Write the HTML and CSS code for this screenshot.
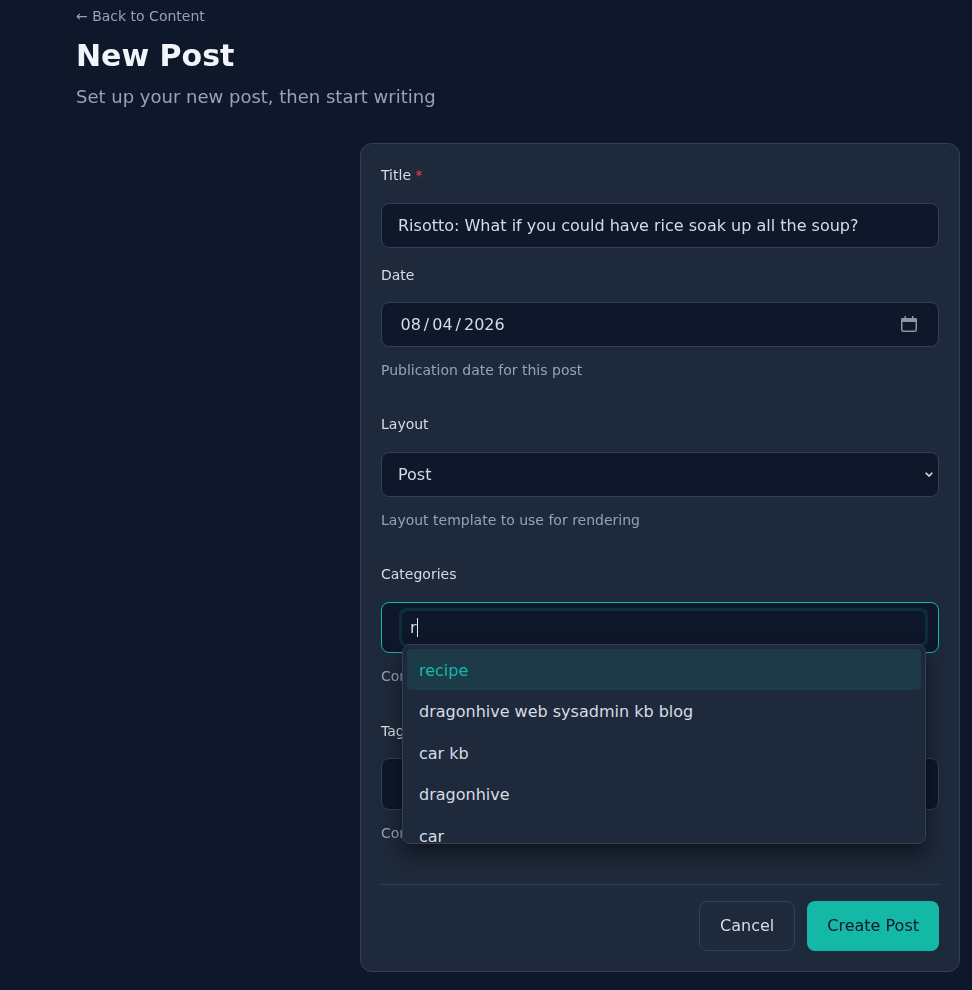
FILE: index.html
```html
<!DOCTYPE html>
<html lang="en">

<head>
    <meta charset="UTF-8">
    <meta name="viewport" content="width=device-width, initial-scale=1.0">
    <title>New Post</title>
    <link rel="stylesheet" href="styles.css">
</head>

<body>
    <main class="page">
        <a class="back-link" href="#">← Back to Content</a>
        <h1 class="page-title">New Post</h1>
        <p class="page-subtitle">Set up your new post, then start writing</p>

        <form class="post-form">
            <div class="field">
                <label class="field-label" for="title">Title <span class="required">*</span></label>
                <input class="text-input" id="title" type="text" value="Risotto: What if you could have rice soak up all the soup?">
            </div>

            <div class="field">
                <label class="field-label" for="date">Date</label>
                <input class="text-input" id="date" type="date" value="2026-08-04">
                <p class="field-hint">Publication date for this post</p>
            </div>

            <div class="field">
                <label class="field-label" for="layout">Layout</label>
                <select class="text-input select-input" id="layout">
                    <option>Post</option>
                    <option>Page</option>
                </select>
                <p class="field-hint">Layout template to use for rendering</p>
            </div>

            <div class="field">
                <label class="field-label" for="categories">Categories</label>
                <div class="tag-box tag-box-active">
                    <input class="tag-input" id="categories" type="text" value="r">
                    <span class="caret"></span>
                    <ul class="suggestions">
                        <li class="suggestion suggestion-active">recipe</li>
                        <li class="suggestion">dragonhive web sysadmin kb blog</li>
                        <li class="suggestion">car kb</li>
                        <li class="suggestion">dragonhive</li>
                        <li class="suggestion">car</li>
                        <li class="suggestion">kb</li>
                    </ul>
                </div>
                <p class="field-hint">Comma-separated categories</p>
            </div>

            <div class="field">
                <label class="field-label" for="tags">Tags</label>
                <div class="tag-box">
                    <input class="tag-input tag-input-idle" id="tags" type="text">
                </div>
                <p class="field-hint">Comma-separated tags</p>
            </div>

            <div class="form-actions">
                <button class="btn btn-secondary" type="button">Cancel</button>
                <button class="btn btn-primary" type="submit">Create Post</button>
            </div>
        </form>
    </main>
</body>

</html>
```
FILE: styles.css
```css
html {
    color-scheme: dark;
}

body {
    margin: 0;
    font-family: "DejaVu Sans", sans-serif;
    line-height: 1.6;
    background-color: #0f172a;
    color: #d5dce6;
}

.page {
    display: flex;
    flex-direction: column;
    align-items: flex-start;
    padding: 5px 12px 18px 76px;
    will-change: opacity;
}

.back-link {
    font-size: 14px;
    color: #94a3b8;
    text-decoration: none;
}

.page-title {
    margin: 11px 0 0;
    font-size: 30px;
    line-height: 1.2;
    font-weight: 700;
    color: #f1f5f9;
}

.page-subtitle {
    margin: 9px 0 0;
    font-size: 18px;
    color: #94a3b8;
}

.post-form {
    align-self: flex-end;
    box-sizing: border-box;
    width: 600px;
    margin-top: 31px;
    padding: 20px;
    background-color: #1e293b;
    border: 1px solid #334155;
    border-radius: 12px;
}

.field {
    margin-bottom: 16px;
}

.field:has(.field-hint) {
    margin-bottom: 32px;
}

.field-label {
    display: block;
    margin-bottom: 16px;
    font-size: 14px;
    color: #d5dce6;
}

.required {
    color: #ef4444;
}

.field-hint {
    margin: 12px 0 0;
    font-size: 14px;
    color: #94a3b8;
}

.text-input {
    display: block;
    box-sizing: border-box;
    width: 100%;
    height: 45px;
    padding: 12px 16px;
    font-family: inherit;
    font-size: 16px;
    color: #d5dce6;
    background-color: #0f172a;
    border: 1px solid #334155;
    border-radius: 8px;
}

/* spaced out date segments */
.text-input::-webkit-datetime-edit-month-field,
.text-input::-webkit-datetime-edit-day-field,
.text-input::-webkit-datetime-edit-year-field {
    padding: 0 2.5px;
}

.text-input::-webkit-datetime-edit-text {
    padding: 0 0.5px;
}

.text-input::-webkit-calendar-picker-indicator {
    width: 16px;
    height: 16px;
    margin-right: 5px;
    padding: 0;
    opacity: 1;
    background: url("data:image/svg+xml,%3Csvg xmlns='http://www.w3.org/2000/svg' viewBox='0 0 16 16'%3E%3Cpath fill='%238b95a5' d='M1 2h2.5V0H5v2h6V0h1.5v2H15l1 1v3H0V3z'/%3E%3Crect x='.75' y='2.75' width='14.5' height='12.5' rx='1.5' fill='none' stroke='%238b95a5' stroke-width='1.5'/%3E%3C/svg%3E") center / 16px 16px no-repeat;
}

.select-input {
    appearance: none;
    background-image: url("data:image/svg+xml,%3Csvg xmlns='http://www.w3.org/2000/svg' viewBox='0 0 8 5'%3E%3Cpath d='M.7.7 4 4l3.3-3.3' fill='none' stroke='%23e2e8f0' stroke-width='1.5'/%3E%3C/svg%3E");
    background-repeat: no-repeat;
    background-position: right 5px center;
    background-size: 8px 5px;
}

.tag-box {
    position: relative;
    padding: 8px 13px 8px 20px;
    background-color: #0f172a;
    border: 1px solid #334155;
    border-radius: 8px;
}

.tag-box-active {
    border-color: #14b8a6;
}

.tag-input {
    display: block;
    box-sizing: border-box;
    width: 100%;
    padding: 4px 8px;
    font-family: inherit;
    font-size: 16px;
    line-height: 25.6px;
    color: #d5dce6;
    background-color: transparent;
    border: none;
    border-radius: 5px;
    outline: none;
    box-shadow: 0 0 0 3px rgba(20, 184, 166, 0.15);
}

.tag-input-idle {
    box-shadow: none;
}

.caret {
    position: absolute;
    top: 15px;
    left: 35px;
    width: 1px;
    height: 19px;
    background-color: #e2e8f0;
}

.suggestions {
    position: absolute;
    z-index: 10;
    top: 41px;
    left: 20px;
    box-sizing: border-box;
    width: 524px;
    max-height: 200px;
    margin: 0;
    padding: 4px;
    list-style: none;
    overflow-y: auto;
    scrollbar-width: none;
    background-color: #1e293b;
    border: 1px solid #334155;
    border-radius: 8px;
    box-shadow: 0 10px 20px rgba(0, 0, 0, 0.5);
}

.suggestion {
    padding: 9px 12px 7px;
    font-size: 16px;
    color: #d5dce6;
    border-radius: 4px;
}

.suggestion-active {
    color: #14b8a6;
    background-color: rgba(20, 184, 166, 0.12);
}

.form-actions {
    display: flex;
    justify-content: flex-end;
    gap: 12px;
    margin-top: 40px;
    padding-top: 16px;
    border-top: 1px solid #334155;
}

.btn {
    padding: 11px 20px;
    font-family: inherit;
    font-size: 16px;
    line-height: 26px;
    border: none;
    border-radius: 8px;
    cursor: pointer;
}

.btn-secondary {
    color: #d5dce6;
    background-color: transparent;
    border: 1px solid #334155;
}

.btn-primary {
    color: #0f172a;
    background-color: #14b8a6;
}
```
